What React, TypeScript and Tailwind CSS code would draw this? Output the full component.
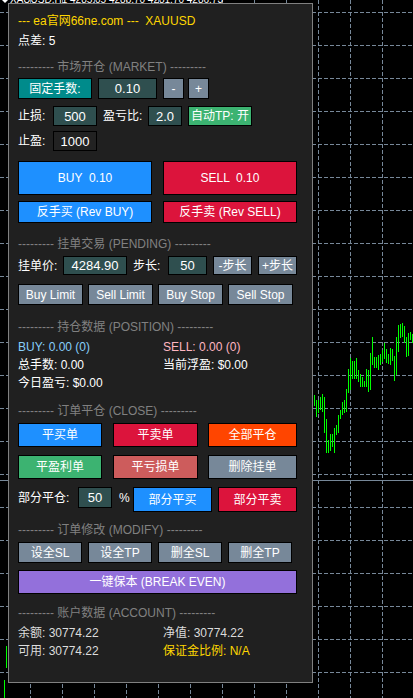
import React from "react";

// chart bars: [top, bottom], one every 2px starting at x=314
const bars: [number, number][] = [
  [395, 406], [400, 417], [400, 413], [397, 410], [394, 412], [397, 433], [419, 453], [440, 453],
  [434, 451], [434, 447], [428, 453], [425, 435], [415, 433], [410, 419], [402, 415], [400, 413],
  [389, 412], [369, 393], [358, 390], [361, 379], [361, 379], [358, 379], [370, 382], [374, 387],
  [377, 387], [381, 387], [369, 387], [370, 392], [353, 390], [337, 365], [357, 368], [357, 368],
  [355, 370], [354, 365], [350, 362], [343, 359], [349, 363], [354, 364], [348, 365], [349, 361],
  [356, 381], [337, 375], [325, 352], [324, 338], [323, 337], [326, 343], [337, 357], [333, 356],
  [332, 340], [334, 343],
];

const GRID = "#778899";

const Chart = () => {
  const vx = Array.from({ length: 12 }, (_, i) => 30 + 32 * i);
  const hy = Array.from({ length: 21 }, (_, i) => 12 + 33 * i);
  return (
    <svg className="absolute inset-0" width="413" height="698">
      {hy.map((y) => (
        <line key={"h" + y} x1="0" x2="413" y1={y + 0.5} y2={y + 0.5} stroke={GRID} strokeDasharray="4 2" />
      ))}
      {vx.map((x) => (
        <line key={"v" + x} x1={x + 0.5} x2={x + 0.5} y1="0" y2="698" stroke={GRID} strokeDasharray="4 2" />
      ))}
      <line x1="0" x2="413" y1="480.5" y2="480.5" stroke={GRID} />
      {bars.map(([t, b], i) => (
        <rect key={i} x={314 + 2 * i} y={t} width="1" height={b - t} fill="#00ff00" />
      ))}
      <rect x="6" y="646" width="1" height="22" fill="#00ff00" />
      <rect x="4" y="680" width="1" height="18" fill="#00ff00" />
      <polygon points="2,0 8,0 5,3" fill="#ffffff" />
      <text x="10" y="3" fill="#ffffff" fontSize="10" fontFamily="Liberation Sans, sans-serif">
        XAUUSD,H1  4285.05 4286.70 4281.70 4286.73
      </text>
    </svg>
  );
};

function Btn({ className, children }: { className: string; children: React.ReactNode }) {
  return (
    <div
      className={`flex shrink-0 items-center justify-center whitespace-pre border border-black text-[12px] leading-none text-white ${className}`}
    >
      {children}
    </div>
  );
}

function Field({ className, children }: { className: string; children: React.ReactNode }) {
  return (
    <div
      className={`flex shrink-0 items-center justify-center border border-black text-[13px] leading-none text-white ${className}`}
    >
      {children}
    </div>
  );
}

function Header({ className, children }: { className: string; children: React.ReactNode }) {
  return (
    <div className={`h-[16px] whitespace-pre leading-[16px] text-[#808080] ${className}`}>
      --------- {children} ---------
    </div>
  );
}

export default function App() {
  return (
    <div className="relative h-[698px] w-[413px] overflow-hidden bg-black [font-family:'Liberation_Sans','Noto_Sans_CJK_SC',sans-serif]">
      <Chart />

      <div className="absolute left-[8px] top-[3px] flex h-[680px] w-[305px] flex-col border border-[#808080] bg-[#202020] pl-[9px] text-[12px] text-white">
        <div className="mt-[9px] h-[16px] whitespace-pre leading-[16px] text-[#ffd700]">
          --- ea官网66ne.com ---  XAUUSD
        </div>
        <div className="mt-[4px] h-[16px] leading-[16px]">点差: 5</div>

        <Header className="mt-[10px]">市场开仓 (MARKET)</Header>
        <div className="mt-[3px] flex h-[21px]">
          <Btn className="w-[74px] bg-[#008b8b]">固定手数:</Btn>
          <Field className="ml-[6px] w-[59px] bg-[#2f4f4f]">0.10</Field>
          <Btn className="ml-[6px] w-[21px] bg-[#778899]">-</Btn>
          <Btn className="ml-[4px] w-[21px] bg-[#778899]">+</Btn>
        </div>
        <div className="mt-[7px] flex h-[20px]">
          <span className="flex w-[35px] items-center">止损:</span>
          <Field className="w-[44px] bg-[#2f4f4f]">500</Field>
          <span className="ml-[6px] flex w-[45px] items-center">盈亏比:</span>
          <Field className="w-[34px] bg-[#2f4f4f]">2.0</Field>
          <Btn className="ml-[6px] w-[64px] bg-[#3cb371]">自动TP: 开</Btn>
        </div>
        <div className="mt-[5px] flex h-[20px]">
          <span className="flex w-[35px] items-center">止盈:</span>
          <Field className="w-[44px] bg-[#222222]">1000</Field>
        </div>

        <div className="mt-[10px] flex h-[34px]">
          <Btn className="w-[134px] bg-[#1e90ff]">BUY  0.10</Btn>
          <Btn className="ml-[11px] w-[134px] bg-[#dc143c]">SELL  0.10</Btn>
        </div>
        <div className="mt-[6px] flex h-[22px]">
          <Btn className="w-[134px] bg-[#1e90ff]">反手买 (Rev BUY)</Btn>
          <Btn className="ml-[11px] w-[134px] bg-[#dc143c]">反手卖 (Rev SELL)</Btn>
        </div>

        <Header className="mt-[13px]">挂单交易 (PENDING)</Header>
        <div className="mt-[4px] flex h-[19px]">
          <span className="flex w-[45px] items-center">挂单价:</span>
          <Field className="w-[64px] bg-[#2f4f4f]">4284.90</Field>
          <span className="ml-[6px] flex w-[35px] items-center">步长:</span>
          <Field className="w-[39px] bg-[#2f4f4f]">50</Field>
          <Btn className="ml-[6px] w-[39px] bg-[#778899]">-步长</Btn>
          <Btn className="ml-[6px] w-[39px] bg-[#778899]">+步长</Btn>
        </div>
        <div className="mt-[9px] flex h-[21px] gap-[5px]">
          <Btn className="w-[65px] bg-[#778899]">Buy Limit</Btn>
          <Btn className="w-[65px] bg-[#778899]">Sell Limit</Btn>
          <Btn className="w-[65px] bg-[#778899]">Buy Stop</Btn>
          <Btn className="w-[65px] bg-[#778899]">Sell Stop</Btn>
        </div>

        <Header className="mt-[14px]">持仓数据 (POSITION)</Header>
        <div className="mt-[3px] grid grid-cols-[145px_1fr] leading-[18px]">
          <span className="text-[#87cefa]">BUY: 0.00 (0)</span>
          <span className="text-[#ffb6c1]">SELL: 0.00 (0)</span>
          <span>总手数: 0.00</span>
          <span>当前浮盈: $0.00</span>
          <span>今日盈亏: $0.00</span>
        </div>

        <Header className="mt-[11px]">订单平仓 (CLOSE)</Header>
        <div className="mt-[4px] flex h-[24px]">
          <Btn className="w-[84px] bg-[#1e90ff]">平买单</Btn>
          <Btn className="ml-[11px] w-[85px] bg-[#dc143c]">平卖单</Btn>
          <Btn className="ml-[10px] w-[89px] bg-[#ff4500]">全部平仓</Btn>
        </div>
        <div className="mt-[8px] flex h-[24px]">
          <Btn className="w-[84px] bg-[#3cb371]">平盈利单</Btn>
          <Btn className="ml-[11px] w-[85px] bg-[#cd5c5c]">平亏损单</Btn>
          <Btn className="ml-[10px] w-[89px] bg-[#778899]">删除挂单</Btn>
        </div>
        <div className="mt-[8px] flex h-[25px] items-start">
          <span className="flex h-[21px] w-[60px] items-center">部分平仓:</span>
          <Field className="h-[21px] w-[34px] bg-[#2f4f4f]">50</Field>
          <span className="ml-[7px] flex h-[21px] w-[14px] items-center">%</span>
          <Btn className="h-[25px] w-[79px] bg-[#1e90ff]">部分平买</Btn>
          <Btn className="ml-[6px] h-[25px] w-[79px] bg-[#dc143c]">部分平卖</Btn>
        </div>

        <Header className="mt-[10px]">订单修改 (MODIFY)</Header>
        <div className="mt-[4px] flex h-[21px] gap-[6px]">
          <Btn className="w-[64px] bg-[#778899]">设全SL</Btn>
          <Btn className="w-[64px] bg-[#778899]">设全TP</Btn>
          <Btn className="w-[64px] bg-[#778899]">删全SL</Btn>
          <Btn className="w-[64px] bg-[#778899]">删全TP</Btn>
        </div>
        <div className="mt-[7px] flex h-[24px]">
          <Btn className="w-[279px] bg-[#9370db]">一键保本 (BREAK EVEN)</Btn>
        </div>

        <Header className="mt-[11px]">账户数据 (ACCOUNT)</Header>
        <div className="mt-[3px] grid grid-cols-[145px_1fr] leading-[18px] text-[#dcdcdc]">
          <span>余额: 30774.22</span>
          <span>净值: 30774.22</span>
          <span>可用: 30774.22</span>
          <span className="text-[#ffd700]">保证金比例: N/A</span>
        </div>
      </div>
    </div>
  );
}
